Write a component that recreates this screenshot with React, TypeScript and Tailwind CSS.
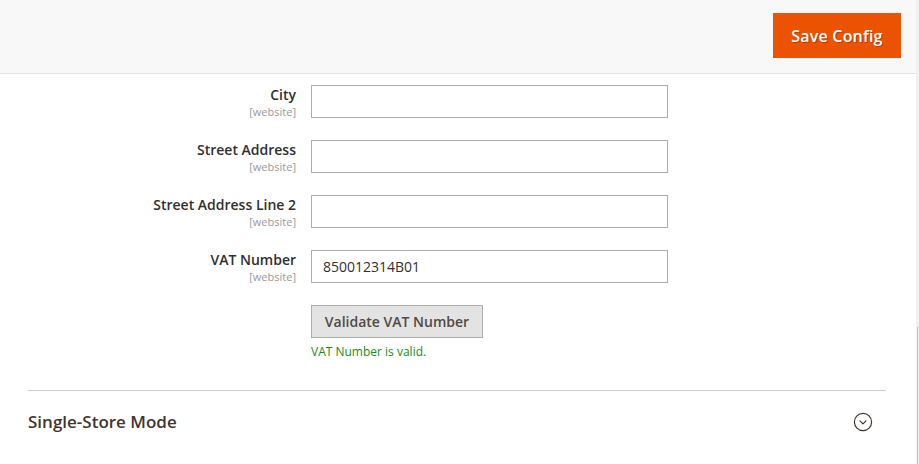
import { useState } from "react";

const fields = [
  { label: "City", value: "" },
  { label: "Street Address", value: "" },
  { label: "Street Address Line 2", value: "" },
  { label: "VAT Number", value: "850012314B01" },
];

function ChevronCircle() {
  return (
    <svg width="20" height="20" viewBox="0 0 20 20" fill="none" aria-hidden="true">
      <circle cx="10" cy="10" r="8.6" stroke="#41362f" strokeWidth="1.2" />
      <path d="M7 8.8l3 3 3-3" stroke="#41362f" strokeWidth="1.2" strokeLinecap="round" strokeLinejoin="round" />
    </svg>
  );
}

export default function App() {
  const [values, setValues] = useState(fields.map((f) => f.value));

  return (
    <div className="flex h-[464px] w-[919px] overflow-hidden bg-white font-['Open_Sans',sans-serif] text-[#303030]">
      <div className="flex w-[916px] flex-col">
        {/* page actions */}
        <div className="flex h-[74px] shrink-0 items-start justify-end border-b border-[#e3e3e3] bg-[#f8f8f8] pr-[15px] pt-[13px]">
          <button className="h-[45px] w-[128px] bg-[#eb5202] text-[16px] font-semibold tracking-[0.2px] text-white [text-shadow:1px_1px_0_rgba(0,0,0,0.25)]">
            Save Config
          </button>
        </div>

        <div className="flex flex-col gap-[22px] pt-[11px]">
          {fields.map((f, i) => (
            <div key={f.label} className="flex h-[33px] items-start">
              <div className="flex w-[296px] flex-col items-end">
                <span className="text-[14px] font-semibold leading-[19px] text-[#303030]">{f.label}</span>
                <span className="-mt-[0.5px] text-[11px] leading-[15px] text-[#999999]">[website]</span>
              </div>
              <input
                className="ml-[15px] h-[33px] w-[357px] border border-[#adadad] bg-white px-[11px] text-[14px] text-[#303030] outline-none"
                value={values[i]}
                onChange={(e) => {
                  const next = [...values];
                  next[i] = e.target.value;
                  setValues(next);
                }}
              />
            </div>
          ))}

          <div className="ml-[311px] flex flex-col items-start">
            <button className="h-[33px] w-[172px] border border-[#adadad] bg-[#e3e3e3] text-[14px] font-semibold text-[#514943]">
              Validate VAT Number
            </button>
            <span className="mt-[6px] text-[12px] leading-[16px] text-[#1a8c1a]">VAT Number is valid.</span>
          </div>
        </div>

        <div className="mx-[28px] mt-[30px] mr-[30px] border-t border-[#cccccc]">
          <div className="flex items-center justify-between pr-[13px] pt-[19px]">
            <span className="text-[17px] font-semibold leading-[23px] text-[#41362f]">Single-Store Mode</span>
            <ChevronCircle />
          </div>
        </div>
      </div>

      {/* scrollbar edge */}
      <div className="flex w-[3px] flex-col bg-[#f0f0f0]">
        <div className="h-[327px] shrink-0" />
        <div className="ml-[1px] w-[1px] flex-1 bg-[#c4c4c4]" />
      </div>
    </div>
  );
}
